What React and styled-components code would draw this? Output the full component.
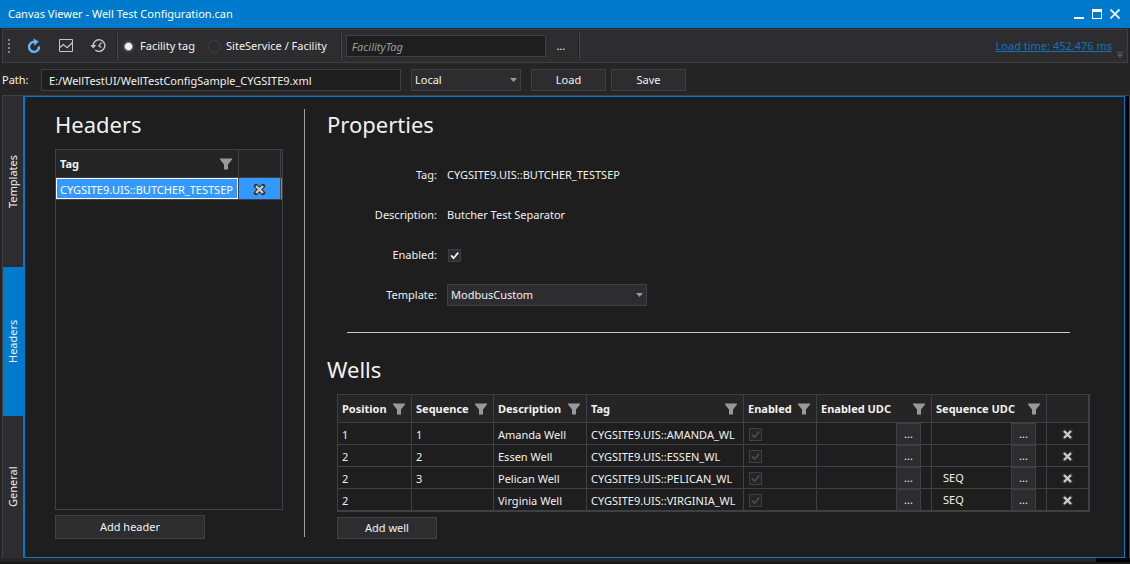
import { useState } from "react";
import styled, { createGlobalStyle } from "styled-components";

const wells = [
    { position: "1", sequence: "1", description: "Amanda Well", tag: "CYGSITE9.UIS::AMANDA_WL", sequenceUdc: "" },
    { position: "2", sequence: "2", description: "Essen Well", tag: "CYGSITE9.UIS::ESSEN_WL", sequenceUdc: "" },
    { position: "2", sequence: "3", description: "Pelican Well", tag: "CYGSITE9.UIS::PELICAN_WL", sequenceUdc: "SEQ" },
    { position: "2", sequence: "", description: "Virginia Well", tag: "CYGSITE9.UIS::VIRGINIA_WL", sequenceUdc: "SEQ" },
];

const wellColumns = [
    { label: "Position", width: 74 },
    { label: "Sequence", width: 82 },
    { label: "Description", width: 93 },
    { label: "Tag" },
    { label: "Enabled", width: 73 },
    { label: "Enabled UDC", width: 115 },
    { label: "Sequence UDC", width: 115 },
];

const tabs = [
    { label: "Templates", size: 171 },
    { label: "Headers", size: 149 },
    { label: "General", size: 142 },
];

const FilterIcon = () => (
    <svg width="12" height="12" viewBox="0 0 12 12" aria-hidden="true">
        <path d="M0 0.5h12v1L8 6.5V11.5H4V6.5L0 1.5z" fill="#999999" />
    </svg>
);

const CrossIcon = () => (
    <svg width="13" height="13" viewBox="0 0 13 13" aria-hidden="true">
        <path d="M3 3l7 7M10 3l-7 7" stroke="#2d2d30" strokeWidth="4.4" strokeLinecap="round" />
        <path d="M3 3l7 7M10 3l-7 7" stroke="#cccccc" strokeWidth="2.4" />
    </svg>
);

const Check = ({ label, ...props }) => (
    <CheckBox>
        <input type="checkbox" aria-label={label} {...props} />
        <svg width="13" height="13" viewBox="0 0 13 13" aria-hidden="true">
            <path d="M3 6.3l2.6 2.9L10.2 3.6" fill="none" stroke="currentColor" strokeWidth="1.8" />
        </svg>
    </CheckBox>
);

const Select = ({ id, label, width, options }) => (
    <SelectBox $width={width}>
        <select id={id} aria-label={label}>
            {options.map((option) => <option key={option}>{option}</option>)}
        </select>
        <svg width="7" height="4" viewBox="0 0 7 4" aria-hidden="true">
            <path d="M0 0h7L3.5 4z" fill="#999999" />
        </svg>
    </SelectBox>
);

const HeaderCell = ({ label }) => (
    <th scope="col">
        <HeaderContent>
            {label}
            <FilterIcon />
        </HeaderContent>
    </th>
);

const TitleBar = () => (
    <Title>
        <h1>Canvas Viewer - Well Test Configuration.can</h1>
        <WindowButton aria-label="Minimize">
            <svg width="10" height="10" viewBox="0 0 10 10"><path d="M0 8h10v2H0z" fill="#fff" /></svg>
        </WindowButton>
        <WindowButton aria-label="Maximize">
            <svg width="10" height="10" viewBox="0 0 10 10"><path d="M0 0h10v10H0zM1 3v6h8V3z" fill="#fff" fillRule="evenodd" /></svg>
        </WindowButton>
        <WindowButton aria-label="Close">
            <svg width="10" height="10" viewBox="0 0 10 10"><path d="M0.5 0.5l9 9M9.5 0.5l-9 9" stroke="#fff" strokeWidth="1.7" /></svg>
        </WindowButton>
    </Title>
);

const MainToolbar = () => (
    <Toolbar>
        <Grip width="3" height="15" viewBox="0 0 3 15" aria-hidden="true">
            <path d="M0 0h2v2H0zM0 4h2v2H0zM0 8h2v2H0zM0 12h2v2H0z" fill="#85858c" />
        </Grip>
        <IconButton aria-label="Refresh">
            <svg width="16" height="16" viewBox="0 0 16 16">
                <path d="M8.6 3.9A5 5 0 1 0 13 8.4" fill="none" stroke="#68b5f7" strokeWidth="2.4" />
                <path d="M7.4 0.4L12.8 3.6 8.4 7.8z" fill="#68b5f7" />
            </svg>
        </IconButton>
        <IconButton aria-label="Chart">
            <svg width="16" height="16" viewBox="0 0 16 16" fill="none" stroke="#c5c5c5">
                <path d="M1.5 1.5h13v12h-13z" />
                <path d="M2 9.5l3.2-3 4 3.2L14.5 4.5" strokeWidth="1.3" />
            </svg>
        </IconButton>
        <IconButton aria-label="History">
            <svg width="16" height="16" viewBox="0 0 16 16" fill="none" stroke="#c5c5c5">
                <path d="M3.2 7.5A5.8 5.8 0 1 1 5.3 12" strokeWidth="1.4" />
                <path d="M0.3 7h6L3.3 10.6z" fill="#c5c5c5" stroke="none" />
                <path d="M11.5 4.5L8.8 7.8l2.6 1.6" strokeWidth="1.2" />
            </svg>
        </IconButton>
        <Separator />
        <Radio>
            <input type="radio" name="mode" defaultChecked />
            Facility tag
        </Radio>
        <Radio>
            <input type="radio" name="mode" />
            SiteService / Facility
        </Radio>
        <Separator />
        <TextInput $width={200} $search placeholder="FacilityTag" aria-label="Facility tag" />
        <MoreButton aria-label="Browse facilities">...</MoreButton>
        <Separator />
        <LoadTime href="#load-time">Load time: 452.476 ms</LoadTime>
        <Overflow width="6" height="6" viewBox="0 0 6 6" aria-hidden="true">
            <path d="M0 0h6v1H0zM0 2h6L3 6z" fill="#55555a" />
        </Overflow>
    </Toolbar>
);

const HeadersSection = () => (
    <HeaderList>
        <Heading>Headers</Heading>
        <ListFrame>
            <Grid>
                <colgroup>
                    <col style={{ width: 183 }} />
                    <col style={{ width: 42 }} />
                    <col />
                </colgroup>
                <thead>
                    <tr>
                        <HeaderCell label="Tag" />
                        <th aria-label="Remove" />
                        <FillerHead />
                    </tr>
                </thead>
                <tbody>
                    <SelectedRow>
                        <FocusedCell>CYGSITE9.UIS::BUTCHER_TESTSEP</FocusedCell>
                        <td><RemoveButton aria-label="Remove header"><CrossIcon /></RemoveButton></td>
                        <FillerCell />
                    </SelectedRow>
                </tbody>
            </Grid>
        </ListFrame>
        <AddButton $width={150} $height={24}>Add header</AddButton>
    </HeaderList>
);

const PropertiesForm = () => {
    const [enabled, setEnabled] = useState(true);

    return (
        <Form>
            <dt>Tag:</dt>
            <dd>CYGSITE9.UIS::BUTCHER_TESTSEP</dd>
            <dt>Description:</dt>
            <dd>Butcher Test Separator</dd>
            <dt><label htmlFor="enabled">Enabled:</label></dt>
            <dd><Check id="enabled" label="Enabled" checked={enabled} onChange={() => setEnabled(!enabled)} /></dd>
            <dt><label htmlFor="template">Template:</label></dt>
            <dd><Select id="template" width={200} options={["ModbusCustom"]} /></dd>
        </Form>
    );
};

const Udc = ({ value, label }) => (
    <UdcCell>
        <UdcContent>
            <UdcValue $marked={value !== ""}>{value}</UdcValue>
            <UdcButton aria-label={label}>...</UdcButton>
        </UdcContent>
    </UdcCell>
);

const WellsTable = () => (
    <TableFrame>
        <Grid>
            <colgroup>
                {wellColumns.map((column) => <col key={column.label} style={{ width: column.width }} />)}
                <col style={{ width: 42 }} />
            </colgroup>
            <thead>
                <tr>
                    {wellColumns.map((column) => <HeaderCell key={column.label} label={column.label} />)}
                    <th aria-label="Remove" />
                </tr>
            </thead>
            <tbody>
                {wells.map((well) => (
                    <tr key={well.tag}>
                        <td>{well.position}</td>
                        <td>{well.sequence}</td>
                        <td>{well.description}</td>
                        <td>{well.tag}</td>
                        <td><Check label={`${well.description} enabled`} defaultChecked disabled /></td>
                        <Udc value="" label="Browse enabled UDC" />
                        <Udc value={well.sequenceUdc} label="Browse sequence UDC" />
                        <td><RemoveButton aria-label={`Remove ${well.description}`}><CrossIcon /></RemoveButton></td>
                    </tr>
                ))}
            </tbody>
        </Grid>
    </TableFrame>
);

const App = () => {
    const [active, setActive] = useState("Headers");

    return (
        <Window>
            <GlobalStyle />
            <TitleBar />
            <MainToolbar />
            <PathBar>
                <label htmlFor="path">Path:</label>
                <TextInput id="path" $width={360} defaultValue="E:/WellTestUI/WellTestConfigSample_CYGSITE9.xml" />
                <Select label="Location" width={110} options={["Local"]} />
                <ButtonGroup>
                    <Button $width={75}>Load</Button>
                    <Button $width={75}>Save</Button>
                </ButtonGroup>
            </PathBar>
            <Body>
                <TabStrip role="tablist" aria-orientation="vertical">
                    {tabs.map((tab) => (
                        <Tab
                            key={tab.label}
                            role="tab"
                            aria-selected={active === tab.label}
                            $size={tab.size}
                            $active={active === tab.label}
                            onClick={() => setActive(tab.label)}
                        >
                            {tab.label}
                        </Tab>
                    ))}
                </TabStrip>
                <Panel>
                    <HeadersSection />
                    <Divider />
                    <Details>
                        <Heading>Properties</Heading>
                        <PropertiesForm />
                        <Rule />
                        <Heading>Wells</Heading>
                        <WellsArea>
                            <WellsTable />
                            <AddButton $width={100} $height={22}>Add well</AddButton>
                        </WellsArea>
                    </Details>
                </Panel>
            </Body>
            <BottomEdge />
        </Window>
    );
};

const line = "#3f3f46";
const accent = "#007acc";

const GlobalStyle = createGlobalStyle`
    * {
        box-sizing: border-box;
    }

    body {
        margin: 0;
        background: #252526;
    }

    body, button, input, select {
        color: #f1f1f1;
        font-family: "Noto Sans", "Open Sans", sans-serif;
        font-size: 11px;
        line-height: 16px;
    }

    svg {
        display: block;
    }
`;

const Window = styled.div`
    display: flex;
    flex-direction: column;
    min-height: 100vh;
`;

const Title = styled.header`
    display: flex;
    align-items: center;
    gap: 8px;
    height: 28px;
    padding: 0 10px 0 8px;
    background: ${accent};

    h1 {
        flex: 1;
        margin: 0;
        color: #fff;
        font-size: 11px;
        font-weight: 400;
    }
`;

const WindowButton = styled.button`
    padding: 0;
    border: 0;
    background: none;
`;

const Toolbar = styled.div`
    display: flex;
    align-items: center;
    height: 34px;
    margin: 1px 2px 0;
    padding: 0 4px 0 5px;
    background: #2d2d30;
    border: 1px solid ${line};
`;

const Grip = styled.svg`
    margin-right: 15px;
`;

const IconButton = styled.button`
    margin-right: 16px;
    padding: 0;
    border: 0;
    background: none;
`;

const Separator = styled.span`
    width: 2px;
    height: 27px;
    margin-right: 4px;
    border-left: 1px solid #222224;
    border-right: 1px solid #46464a;

    button + & {
        margin-left: -6px;
    }
`;

const Radio = styled.label`
    display: flex;
    align-items: center;
    gap: 5px;
    margin-right: 13px;

    input {
        appearance: none;
        width: 13px;
        height: 13px;
        margin: 0;
        border: 1px solid ${line};
        border-radius: 50%;
        background: #2d2d30;
    }

    input:checked {
        background: radial-gradient(circle, #f1f1f1 3px, #2d2d30 5px);
    }
`;

const TextInput = styled.input`
    width: ${(props) => props.$width}px;
    height: 22px;
    padding: 0 ${(props) => (props.$search ? 5 : 7)}px;
    border: 1px solid ${line};
    background: #1e1e1e;

    &::placeholder {
        color: #999999;
        font-style: italic;
        opacity: 1;
    }
`;

const MoreButton = styled.button`
    width: 30px;
    height: 22px;
    margin-right: 8px;
    padding: 0;
    border: 0;
    background: none;
`;

const LoadTime = styled.a`
    margin-left: auto;
    color: #0e74bc;
`;

const Overflow = styled.svg`
    align-self: flex-end;
    margin: 0 0 4px 5px;
`;

const PathBar = styled.div`
    display: flex;
    align-items: center;
    gap: 10px;
    height: 33px;
    margin: 0 1px 0 2px;
    padding-top: 2px;
    border-bottom: 1px solid ${line};

    label {
        width: 29px;
    }
`;

const ButtonGroup = styled.div`
    display: flex;
    gap: 5px;
`;

const Button = styled.button`
    width: ${(props) => props.$width}px;
    height: ${(props) => props.$height || 22}px;
    padding: 0;
    border: 1px solid ${line};
    background: #2d2d30;
`;

const AddButton = styled(Button)`
    margin-top: 5px;
`;

const SelectBox = styled.span`
    display: grid;
    align-items: center;
    width: ${(props) => props.$width}px;

    select, svg {
        grid-area: 1 / 1;
    }

    select {
        appearance: none;
        height: 22px;
        padding: 0 18px 0 3px;
        border: 1px solid ${line};
        border-radius: 0;
        background: #2d2d30;
    }

    svg {
        justify-self: end;
        margin-right: 4px;
        pointer-events: none;
    }
`;

const CheckBox = styled.span`
    display: grid;
    width: 13px;
    height: 13px;
    margin-left: 1px;

    input, svg {
        grid-area: 1 / 1;
    }

    input {
        appearance: none;
        width: 13px;
        height: 13px;
        margin: 0;
        border: 1px solid ${line};
        background: #2d2d30;
    }

    svg {
        visibility: hidden;
        pointer-events: none;
    }

    input:checked + svg {
        visibility: visible;
    }

    input:disabled {
        background: #252526;
    }

    input:disabled + svg {
        color: #4a4a4f;
    }
`;

const Body = styled.div`
    display: flex;
    flex: 1;
    padding-right: 4px;
    background: linear-gradient(#000, #000) right / 4px 100% no-repeat;
    border-right: 1px solid ${line};
`;

const TabStrip = styled.div`
    display: flex;
    flex-direction: column;
    width: 21px;
    margin-left: 2px;
    border-left: 1px solid ${line};
`;

const Tab = styled.button`
    display: flex;
    flex: ${(props) => props.$size} 1 0;
    align-items: center;
    justify-content: center;
    padding: 0;
    border: 0;
    background: ${(props) => (props.$active ? accent : "#2d2d30")};
    writing-mode: vertical-rl;
    transform: rotate(180deg);
`;

const Panel = styled.main`
    display: flex;
    flex: 1;
    min-width: 0;
    padding: 12px 34px 18px 30px;
    border: 1px solid ${accent};
    border-left-width: 2px;
    background: #1e1e1e;
`;

const HeaderList = styled.section`
    display: flex;
    flex-direction: column;
    width: 228px;
`;

const Heading = styled.h2`
    margin: 0 0 10px;
    font-size: 22px;
    font-weight: 400;
    line-height: 30px;
`;

const ListFrame = styled.div`
    flex: 1;
    border: 1px solid ${line};
`;

const Grid = styled.table`
    width: 100%;
    table-layout: fixed;
    border-spacing: 0;

    th, td {
        padding: 0 0 0 4px;
        border-right: 1px solid ${line};
        border-bottom: 1px solid ${line};
        text-align: left;
        white-space: nowrap;
    }

    th {
        height: 28px;
        background: #252526;
    }

    td {
        height: 22px;
        padding-top: 2px;
    }
`;

const HeaderContent = styled.div`
    display: flex;
    align-items: center;
    justify-content: space-between;
    padding-right: 6px;
`;

const FillerHead = styled.td`
    && {
        padding: 0;
        border-right: 0;
        background: #252526;
    }
`;

const FillerCell = styled.td`
    && {
        padding: 0;
        border-right: 0;
    }
`;

const SelectedRow = styled.tr`
    background: #3399ff;
    color: #fff;
`;

const FocusedCell = styled.td`
    box-shadow: inset 0 0 0 1px #fff;
`;

const RemoveButton = styled.button`
    display: flex;
    align-items: center;
    justify-content: center;
    width: 100%;
    padding: 0 4px 0 0;
    border: 0;
    background: none;
`;

const Divider = styled.div`
    width: 1px;
    margin: 0 22px 2px 21px;
    background: #a0a0a0;
`;

const Details = styled.div`
    flex: 1;
    min-width: 0;
`;

const Form = styled.dl`
    display: grid;
    grid-template-columns: 110px 1fr;
    grid-auto-rows: 40px;
    column-gap: 10px;
    align-items: center;
    margin: 16px 0 0;

    dt {
        text-align: right;
    }

    dd {
        margin: 0;
    }
`;

const Rule = styled.hr`
    height: 1px;
    margin: 17px 20px 21px;
    border: 0;
    background: #c8c8c8;
`;

const WellsArea = styled.div`
    margin-left: 10px;
`;

const TableFrame = styled.div`
    border: 1px solid ${line};
`;

const UdcCell = styled.td`
    && {
        padding: 0;
    }
`;

const UdcContent = styled.div`
    display: flex;
    align-items: center;
    padding-right: 10px;
`;

const UdcValue = styled.span`
    width: 40px;
    margin-right: auto;
    padding: 2px 0 0 11px;
    border-bottom: 2px solid ${(props) => (props.$marked ? "#222006" : "transparent")};
`;

const UdcButton = styled.button`
    width: 25px;
    height: 21px;
    padding: 0;
    border: 1px solid ${line};
    border-bottom: 0;
    background: #2d2d30;
`;

const BottomEdge = styled.footer`
    height: 6px;
    border-bottom: 2px solid #1b1718;
    background: linear-gradient(#000, #000) right / 34px 100% no-repeat;
`;

export default App;
